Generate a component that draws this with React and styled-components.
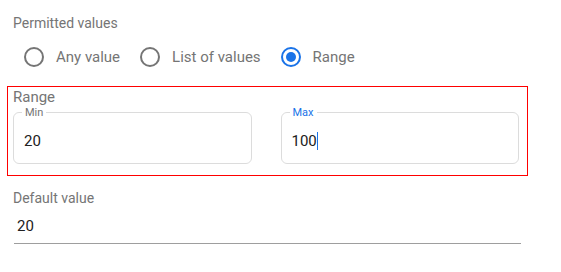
import React from "react";
import styled, { createGlobalStyle } from "styled-components";

const GlobalStyle = createGlobalStyle`
  body {
    margin: 0;
    background: #fff;
    font-family: Roboto, "Liberation Sans", sans-serif;
  }
`;

const Page = styled.div`
  width: 561px;
  height: 272px;
  padding-top: 15px;
  box-sizing: border-box;
`;

const Label = styled.div`
  font-size: 14px;
  line-height: 17px;
  color: #757575;
  padding-left: 13px;
`;

const RadioRow = styled.div`
  display: flex;
  align-items: center;
  gap: 20px;
  margin: 14px 0 0 24px;
  height: 22px;
`;

const RadioItem = styled.label`
  display: flex;
  align-items: center;
  gap: 12px;
  font-size: 15px;
  color: #757575;
`;

const RadioCircle = styled.span`
  width: 20px;
  height: 20px;
  box-sizing: border-box;
  border-radius: 50%;
  border: 2px solid ${(p) => (p.checked ? "#1a73e8" : "#757575")};
  display: flex;
  align-items: center;
  justify-content: center;

  &::after {
    content: "";
    width: 10px;
    height: 10px;
    border-radius: 50%;
    background: #1a73e8;
    display: ${(p) => (p.checked ? "block" : "none")};
  }
`;

const RangeBox = styled.div`
  margin: 18px 0 0 7px;
  width: 521px;
  height: 90px;
  box-sizing: border-box;
  border: 1px solid #ff0000;
  padding: 2px 8px 0 5px;
`;

const RangeTitle = styled.div`
  font-size: 15px;
  line-height: 17px;
  color: #757575;
`;

const Fields = styled.div`
  display: flex;
  gap: 29px;
`;

const Outlined = styled.fieldset`
  margin: 0;
  flex: 1;
  height: 58px;
  box-sizing: border-box;
  border: 1px solid #dcdcdc;
  border-radius: 6px;
  padding: 0 10px;
  min-width: 0;
`;

const Legend = styled.legend`
  font-size: 11px;
  line-height: 13px;
  padding: 0 3px;
  margin-left: -2px;
  color: ${(p) => (p.focused ? "#1a73e8" : "#757575")};
`;

const Value = styled.div`
  font-size: 15px;
  line-height: 18px;
  color: #212121;
  margin-top: 13px;
  display: flex;
  align-items: center;
`;

const Caret = styled.span`
  width: 1px;
  height: 18px;
  background: #1a73e8;
`;

const DefaultLabel = styled(Label)`
  margin-top: 14px;
`;

const UnderlineInput = styled.div`
  margin: 10px 0 0 14px;
  width: 507px;
  padding: 0 0 8px 3px;
  box-sizing: border-box;
  border-bottom: 1px solid #9e9e9e;
  font-size: 15px;
  line-height: 18px;
  color: #212121;
`;

export default function App() {
  return (
    <Page>
      <GlobalStyle />
      <Label>Permitted values</Label>
      <RadioRow>
        <RadioItem>
          <RadioCircle />
          Any value
        </RadioItem>
        <RadioItem>
          <RadioCircle />
          List of values
        </RadioItem>
        <RadioItem>
          <RadioCircle checked />
          Range
        </RadioItem>
      </RadioRow>
      <RangeBox>
        <RangeTitle>Range</RangeTitle>
        <Fields>
          <Outlined>
            <Legend>Min</Legend>
            <Value>20</Value>
          </Outlined>
          <Outlined>
            <Legend focused>Max</Legend>
            <Value>
              100
              <Caret />
            </Value>
          </Outlined>
        </Fields>
      </RangeBox>
      <DefaultLabel>Default value</DefaultLabel>
      <UnderlineInput>20</UnderlineInput>
    </Page>
  );
}
